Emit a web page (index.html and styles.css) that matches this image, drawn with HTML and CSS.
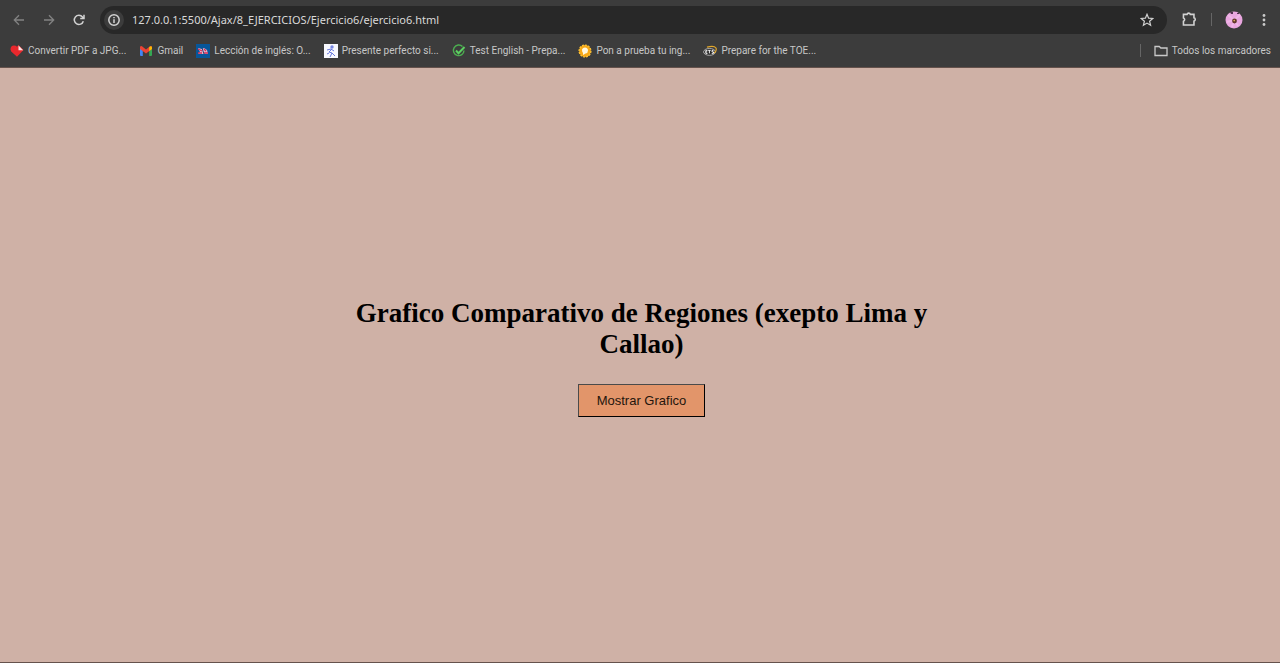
FILE: index.html
```html
<!DOCTYPE html>
<html lang="es">
<head>
<meta charset="utf-8">
<meta name="viewport" content="width=device-width, initial-scale=1">
<title>Grafico Comparativo</title>
<link rel="stylesheet" href="styles.css">
</head>
<body>
<header class="browser">
  <div class="toolbar">
    <nav class="nav">
      <button class="icon-button dim" aria-label="Atrás"><svg width="14" height="14" viewBox="0 0 14 14"><path d="M12 7H2.500M7 2.300 2.300 7 7 11.700"/></svg></button>
      <button class="icon-button dim" aria-label="Adelante"><svg width="14" height="14" viewBox="0 0 14 14"><path d="M2 7h9.500M7 2.300 11.700 7 7 11.700"/></svg></button>
      <button class="icon-button" aria-label="Recargar"><svg width="14" height="14" viewBox="0 0 14 14"><path d="M11.300 8.200A4.600 4.600 0 1 1 10.500 4l1.300 1.400M12 1.800v3.800H8.200"/></svg></button>
    </nav>
    <div class="address">
      <button class="site-info" aria-label="Información del sitio"><svg width="14" height="14" viewBox="0 0 14 14"><circle cx="7" cy="7" r="5.200"/><path d="M7 6.300v3.600M7 3.900v1.300"/></svg></button>
      <input class="url" type="text" aria-label="Dirección" value="127.0.0.1:5500/Ajax/8_EJERCICIOS/Ejercicio6/ejercicio6.html">
      <button class="icon-button" aria-label="Añadir a marcadores"><svg width="14" height="14" viewBox="0 0 14 14"><path class="thin" d="m7 1.300 1.600 3.900 4.200.3-3.200 2.700 1 4.100L7 10.100l-3.600 2.200 1-4.100-3.200-2.700 4.200-.3z"/></svg></button>
    </div>
    <div class="actions">
      <button class="icon-button" aria-label="Extensiones"><svg width="17" height="17" viewBox="0 0 16 16"><path d="M2.300 3.200h3.400a1.600 1.600 0 0 1 3.100 0h3.400v3.200a1.600 1.600 0 0 1 0 3.100v3.700H2.300V9.700a1.700 1.700 0 0 0 0-3.200z"/></svg></button>
      <span class="divider"></span>
      <button class="icon-button" aria-label="Perfil"><svg class="filled" width="18" height="18" viewBox="0 0 18 18"><circle cx="9" cy="9" r="8.500" fill="#e9a6df"/><path d="M9 9 3 4M9 9l6-5M9 9 2 11M9 9l4 6M9 9l-2 7" stroke="#efb6e6" stroke-width="2"/><path d="M5 1h3v2H6zM12 2h2v1h-2z" fill="#51314d"/><circle cx="9.500" cy="10" r="2.400" fill="#623629"/><circle cx="9.200" cy="9.600" r=".8" fill="#e8ba61"/></svg></button>
      <button class="icon-button" aria-label="Menú"><svg class="filled" width="14" height="14" viewBox="0 0 14 14"><circle cx="7" cy="2.500" r="1.400"/><circle cx="7" cy="7" r="1.400"/><circle cx="7" cy="11.500" r="1.400"/></svg></button>
    </div>
  </div>
  <nav class="bookmarks" aria-label="Marcadores">
    <a class="bookmark" href="#"><svg width="14" height="14" viewBox="0 0 14 14"><path d="M.5 5.500Q.5 1.500 4 1.500q2 0 3 1.300L8.500 1l5 5L7 12.800 1.200 7.500z" fill="#e9282d"/><path d="M8.500 1.500v4.700h4.700z" fill="#f8e4e2"/></svg><span>Convertir PDF a JPG...</span></a>
    <a class="bookmark" href="#"><svg width="14" height="14" viewBox="0 0 14 14"><path d="M1 4h2.800v8H2q-1 0-1-1z" fill="#4285f4"/><path d="M10.200 4H13v7q0 1-1 1h-1.800z" fill="#34a853"/><path d="M1 3.200Q1.300 1.500 3 2.300L7 5.500l4-3.200q1.700-.8 2 .9v1.700L7 9.500 1 4.900z" fill="#ea4335"/><path d="M10.200 2.900q2.600-1.600 2.800.5v1.500l-2.800 2.200z" fill="#fbbc04"/></svg><span>Gmail</span></a>
    <a class="bookmark" href="#"><svg width="14" height="14" viewBox="0 0 14 14"><path d="M0 0h14v14H0z" fill="#07569a"/><path d="m2 4 4 1 2-1 3 2 1 4H2l2-2z" fill="#dfb7cc"/><path d="m2 5 4 2M8 5l2 2M2 9h4m2 0h4" stroke="#d62f58" stroke-width="1.300"/><path d="m6 4 2 6" stroke="#28467e"/></svg><span>Lección de inglés: O...</span></a>
    <a class="bookmark" href="#"><svg width="14" height="14" viewBox="0 0 14 14"><path d="M0 0h14v14H0z" fill="#f8f9ff"/><circle cx="8" cy="3" r="1.700" fill="#7888e5"/><path d="m8 5-3 3 3 1-2 4M3 6l4-1 3 2M8 9l3 3M3 10l2-1" fill="none" stroke="#6678dd"/></svg><span>Presente perfecto si...</span></a>
    <a class="bookmark" href="#"><svg width="14" height="14" viewBox="0 0 14 14"><path d="M10.500 2.600A5.300 5.300 0 1 0 12 6.500" fill="none" stroke="#4caf50" stroke-width="1.400"/><path d="m4 6.500 2.500 2.700L12.500 3" fill="none" stroke="#5bcf60" stroke-width="2"/></svg><span>Test English - Prepa...</span></a>
    <a class="bookmark" href="#"><svg width="14" height="14" viewBox="0 0 14 14"><circle cx="7" cy="7" r="5.900" fill="#f6a817"/><circle cx="7" cy="7" r="5.900" fill="none" stroke="#ffc333" stroke-width="1.300" stroke-dasharray="2 1"/><path d="M4 6q0-2 3-2.500 3 .3 3 3T7.500 9.500L5 11V9Q4 8 4 6" fill="#fff8df"/></svg><span>Pon a prueba tu ing...</span></a>
    <a class="bookmark" href="#"><svg width="14" height="14" viewBox="0 0 14 14"><ellipse cx="6.500" cy="7.900" rx="5.900" ry="3.400" fill="#292929" stroke="#ccc" stroke-width=".8"/><path d="M4 3.200q7-2 9 .8 1 3-2 5" fill="none" stroke="#e2a72b" stroke-width="1.200"/><path d="M4.500 6.400H2.800v3h1.700M2.800 7.900h1.400M5.200 6.400h2.500M6.400 6.400v3M10.500 6.400H9v1.500h1.500v1.500H8.700" fill="none" stroke="#fff" stroke-width=".9"/></svg><span>Prepare for the TOE...</span></a>
    <span class="spacer"></span>
    <span class="divider"></span>
    <a class="bookmark all" href="#"><svg width="14" height="14" viewBox="0 0 14 14"><path d="M1 2.500h4.300l1.500 1.500H13v7.500H1z" fill="none" stroke="#c9c9c9" stroke-width="1.300"/></svg><span>Todos los marcadores</span></a>
  </nav>
</header>
<main class="page">
  <section class="card">
    <h1>Grafico Comparativo de Regiones (exepto Lima y Callao)</h1>
    <button class="show">Mostrar Grafico</button>
  </section>
</main>
</body>
</html>
```
FILE: styles.css
```css
* { box-sizing: border-box; }
body {
  margin: 0;
  min-height: 100vh;
  display: flex;
  flex-direction: column;
  background: #cfb1a6;
  font-family: "Liberation Serif", "Times New Roman", serif;
}
.browser {
  background: #3c3c3c;
  color: #c7c7c7;
  font-family: Roboto, "Open Sans", sans-serif;
  border-bottom: 1px solid #65524c;
}
.toolbar {
  display: flex;
  align-items: center;
  height: 39px;
  padding: 0 8px 0 11px;
}
.nav { display: flex; gap: 14px; margin-right: 13px; }
.icon-button, .site-info {
  display: flex;
  align-items: center;
  justify-content: center;
  min-width: 16px;
  padding: 0;
  border: 0;
  background: none;
}
.icon-button svg, .site-info svg {
  fill: none;
  stroke: #d2d2d2;
  stroke-width: 1.5;
}
.icon-button .thin { stroke-width: 1.2; }
.icon-button svg.filled { stroke: none; fill: #c9c9c9; }
.icon-button.dim svg { stroke: #828282; stroke-width: 1.3; }
.address {
  flex: 1;
  display: flex;
  align-items: center;
  height: 28px;
  padding: 0 12px 0 4px;
  border-radius: 14px;
  background: #282828;
}
.site-info { width: 20px; height: 20px; border-radius: 50%; background: #3c3c3c; }
.url {
  flex: 1;
  min-width: 0;
  padding: 0 0 0 8px;
  border: 0;
  outline: 0;
  background: none;
  color: #d9d9d9;
  font: 11px "Noto Sans", "Open Sans", sans-serif;
}
.actions { display: flex; align-items: center; gap: 13px; margin-left: 14px; }
.divider { width: 1px; height: 13px; background: #666; }
.bookmarks {
  display: flex;
  align-items: center;
  gap: 13px;
  height: 28px;
  padding: 0 9px 5px 10px;
}
.bookmark {
  display: flex;
  align-items: center;
  gap: 4px;
  color: inherit;
  font-size: 10px;
  text-decoration: none;
  white-space: nowrap;
}
.bookmark svg { flex: none; }
.spacer { flex: 1; }
.page {
  flex: 1;
  display: flex;
  align-items: center;
  justify-content: center;
  padding: 0 0 16px 3px;
  border-bottom: 1px solid #65524c;
}
.card { max-width: 600px; text-align: center; }
h1 { margin: 0 0 24px; font-size: 27px; line-height: 31px; }
.show {
  padding: 8px 18px;
  border: 1px solid #000;
  border-color: #4a4a4a #000 #000 #4a4a4a;
  background: #e2956a;
  color: #24150d;
  font: 13px/15px "Liberation Sans", Arial, sans-serif;
}
```
